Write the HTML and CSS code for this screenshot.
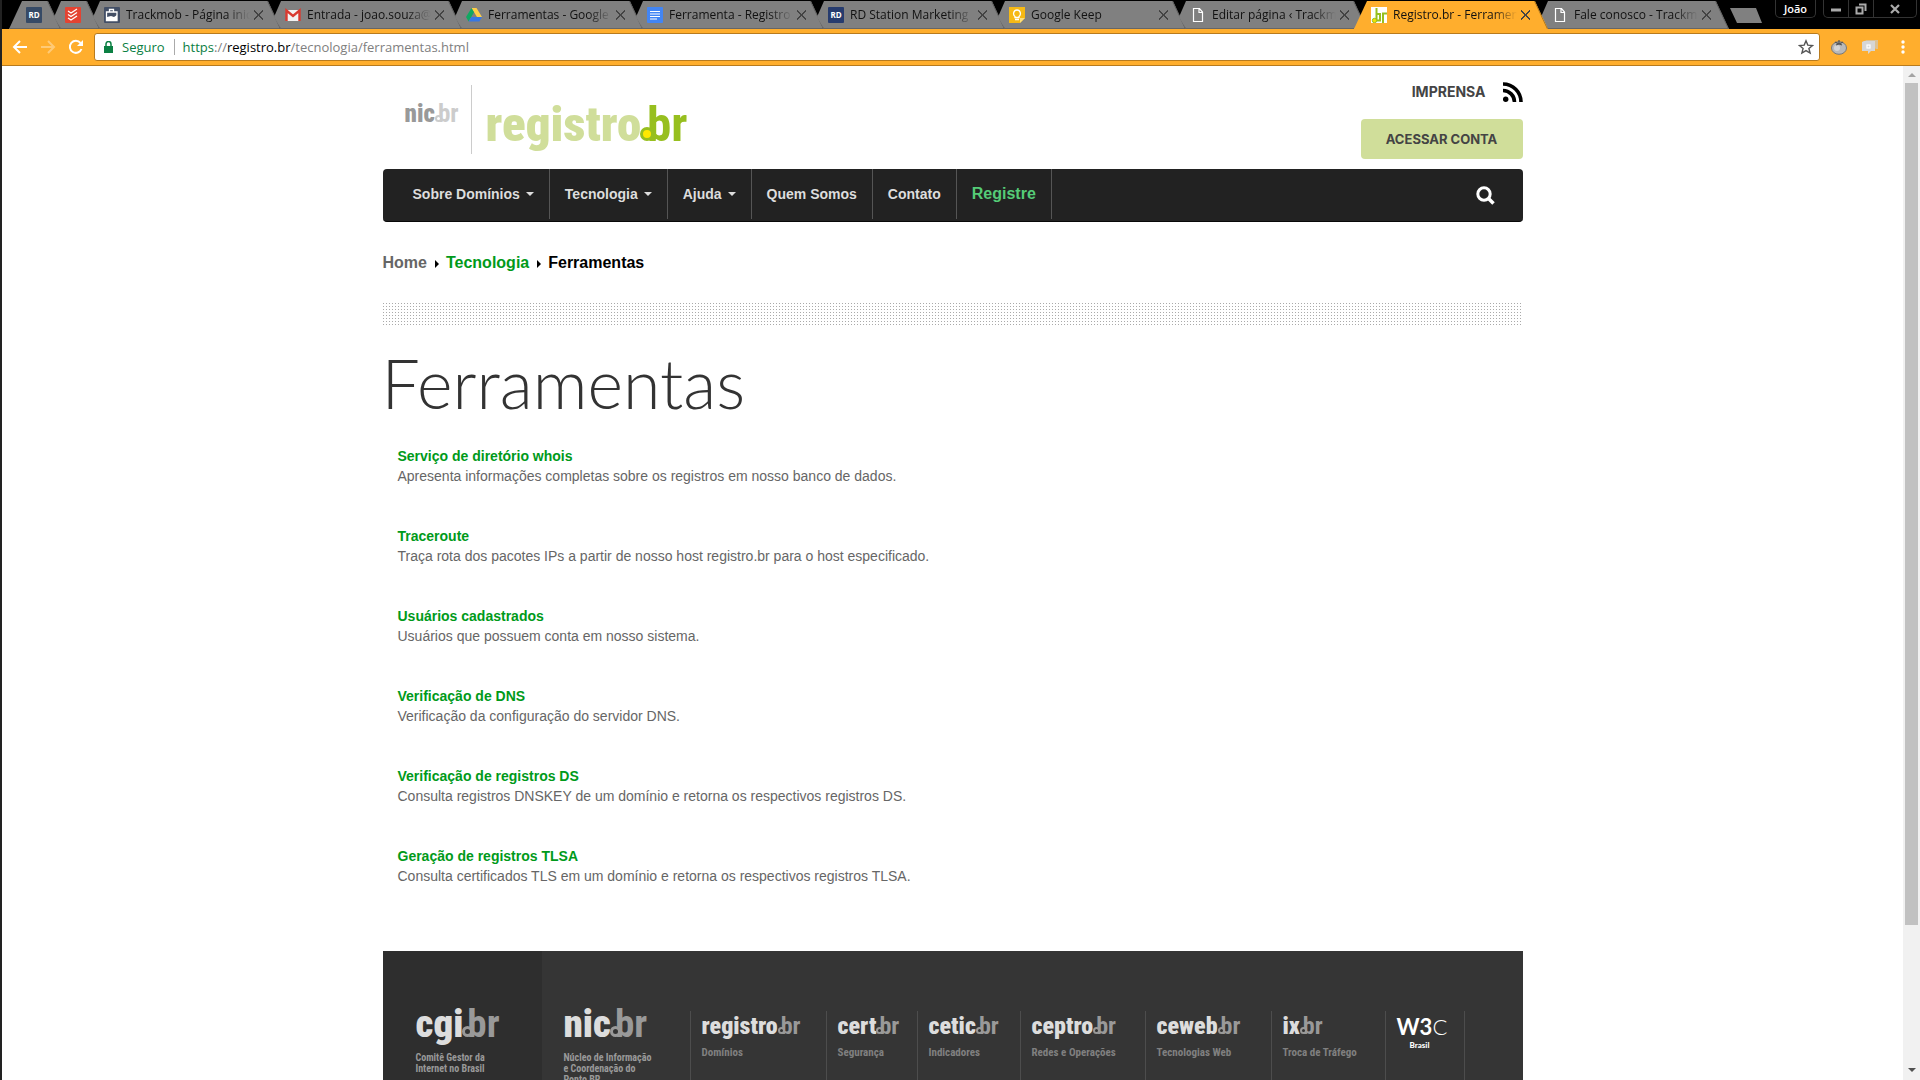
FILE: index.html
```html
<!DOCTYPE html>
<html lang="pt-BR">
<head>
<meta charset="utf-8">
<title>Registro.br - Ferramentas</title>
<link rel="stylesheet" href="styles.css">
</head>
<body>
<div class="window">
  <header class="tabstrip">
    <div class="tabs">
      <div class="tab pinned"><span class="fav rd">RD</span></div>
      <div class="tab pinned"><svg class="fav" viewBox="0 0 16 16"><rect width="16" height="16" rx="1" fill="#e44332"/><path d="M2 4l3 2 6-4M2 7.500l3 2 6-4M2 11l3 2 6-4" transform="translate(1 0)" fill="none" stroke="#fff" stroke-width="1.300"/></svg></div>
      <div class="tab"><svg class="fav" viewBox="0 0 16 16"><rect width="16" height="16" rx="1" fill="#434f66"/><path d="M5.500 5V2.500h4V5M2.500 5h10.500v8.500H2.500z" fill="none" stroke="#fff" stroke-width="1.300"/><path d="M3 10l4-1 3 1 3-2v5.500H3z" fill="#fff"/></svg><span class="label">Trackmob - Página inic</span><button class="close" aria-label="Fechar"></button></div>
      <div class="tab"><svg class="fav" viewBox="0 0 16 16"><path d="M1 3h14v11H1z" fill="#f2f2f2"/><path d="M1.500 14V3.500L8 9l6.500-5.500V14" fill="none" stroke="#d93a30" stroke-width="2.400"/></svg><span class="label">Entrada - joao.souza@</span><button class="close" aria-label="Fechar"></button></div>
      <div class="tab"><svg class="fav" viewBox="0 0 16 16"><path d="M5.500 1h5L16 10h-5z" fill="#ffcf48"/><path d="M5.500 1L0 10l2.600 4.500L8 5.300z" fill="#11a861"/><path d="M5.300 10H16l-2.600 4.500H2.600z" fill="#3777e3"/></svg><span class="label">Ferramentas - Google</span><button class="close" aria-label="Fechar"></button></div>
      <div class="tab"><svg class="fav" viewBox="0 0 16 16"><rect width="16" height="16" rx="1" fill="#4285f4"/><path d="M3 4.500h10M3 7h10M3 9.500h10M3 12h7" stroke="#fff" stroke-width="1.200"/></svg><span class="label">Ferramenta - Registro</span><button class="close" aria-label="Fechar"></button></div>
      <div class="tab"><span class="fav rd navy">RD</span><span class="label">RD Station Marketing</span><button class="close" aria-label="Fechar"></button></div>
      <div class="tab"><svg class="fav" viewBox="0 0 16 16"><path d="M0 0h16v11l-5 5H0z" fill="#f6b915"/><path d="M11 16v-5h5z" fill="#ffe07a"/><path d="M6 9.500C3.500 7.500 4.500 3 8 3s4.500 4.500 2 6.500v1H6zM6 12.500h4" fill="none" stroke="#fff" stroke-width="1.300"/></svg><span class="label">Google Keep</span><button class="close" aria-label="Fechar"></button></div>
      <div class="tab"><svg class="fav" viewBox="0 0 16 16"><path d="M3.500 1.500h6l3 3.500v9.500h-9zM9 1.500V5.500h3.500" fill="none" stroke="#fff" stroke-width="1.200"/></svg><span class="label">Editar página ‹ Trackm</span><button class="close" aria-label="Fechar"></button></div>
      <div class="tab active"><svg class="fav" viewBox="0 0 16 16"><path d="M0 0h16v16H0z" fill="#fff"/><path d="M5.500 1v12.500H9V7H5.500M12 16V6.500h4" fill="none" stroke="#97bf1f" stroke-width="2"/><circle cx="3.500" cy="13.500" r="2.200" fill="#f4e300" stroke="#97bf1f"/></svg><span class="label">Registro.br - Ferramen</span><button class="close" aria-label="Fechar"></button></div>
      <div class="tab"><svg class="fav" viewBox="0 0 16 16"><path d="M3.500 1.500h6l3 3.500v9.500h-9zM9 1.500V5.500h3.500" fill="none" stroke="#fff" stroke-width="1.200"/></svg><span class="label">Fale conosco - Trackm</span><button class="close" aria-label="Fechar"></button></div>
      <button class="newtab" aria-label="Nova guia"></button>
    </div>
    <button class="profile">João</button>
    <div class="controls">
      <button aria-label="Minimizar"><svg viewBox="0 0 12 12"><path d="M1 7h10" stroke="#aaa" stroke-width="3"/></svg></button>
      <button aria-label="Restaurar"><svg viewBox="0 0 12 12"><path d="M1.500 4.500h6v6h-6zM4 1.500h6.500V8" fill="none" stroke="#aaa" stroke-width="2"/></svg></button>
      <button class="wide" aria-label="Fechar janela"><svg viewBox="0 0 12 12"><path d="M2 2l8 8M10 2l-8 8" stroke="#aaa" stroke-width="2.200"/></svg></button>
    </div>
  </header>

  <div class="toolbar">
    <button class="tool" aria-label="Voltar"><svg viewBox="0 0 16 16"><path d="M15 8H2M8 2L2 8l6 6" fill="none" stroke="#fff" stroke-width="2"/></svg></button>
    <button class="tool dim" aria-label="Avançar"><svg viewBox="0 0 16 16"><path d="M1 8h13M8 2l6 6-6 6" fill="none" stroke="#fff" stroke-width="2"/></svg></button>
    <button class="tool" aria-label="Recarregar"><svg viewBox="0 0 16 16"><path d="M13.500 10A6 6 0 1 1 12.500 4" fill="none" stroke="#fff" stroke-width="2"/><path d="M15 1v6H9z" fill="#fff"/></svg></button>
    <div class="omnibox">
      <svg class="lock" viewBox="0 0 9 12"><path d="M0 5h9v7H0z" fill="#0b8043"/><path d="M2 5V3a2.500 2.500 0 0 1 5 0v2" fill="none" stroke="#0b8043" stroke-width="1.500"/></svg>
      <span class="secure">Seguro</span>
      <span class="url"><span class="scheme">https</span>://<span class="host">registro.br</span>/tecnologia/ferramentas.html</span>
      <button class="star" aria-label="Favoritar"><svg viewBox="0 0 16 16"><path d="M8 1.800l1.800 4.300 4.700.4-3.600 3 1.200 4.600L8 11.600l-4.100 2.500 1.200-4.600-3.600-3 4.700-.4z" fill="none" stroke="#555" stroke-width="1.400"/></svg></button>
    </div>
    <button class="ext" aria-label="Tomato"><svg viewBox="0 0 16 16"><ellipse cx="8" cy="9" rx="7.500" ry="6.300" fill="#b9b9b9" stroke="#777"/><ellipse cx="6" cy="9" rx="3" ry="3" fill="#d5d5d5"/><path d="M8 1v4M4 3l4 2 4-2M5 6l3-1 3 1" fill="none" stroke="#555" stroke-width="1.200"/></svg></button>
    <button class="ext" aria-label="Chat"><svg viewBox="0 0 16 16"><path d="M3 1h13v9h-2z" fill="#dcc193"/><path d="M0 3l2-1h11v10h-4l-3 3v-3H0z" fill="#d6d6d6"/><rect x="5" y="6" width="3" height="3" fill="none" stroke="#fff" stroke-width="1.200"/></svg></button>
    <button class="menu" aria-label="Menu"><svg viewBox="0 0 4 14"><circle cx="2" cy="2" r="1.700" fill="#fff"/><circle cx="2" cy="7" r="1.700" fill="#fff"/><circle cx="2" cy="12" r="1.700" fill="#fff"/></svg></button>
  </div>

  <div class="viewport">
    <div class="page">
      <div class="container">
        <header class="masthead">
          <a class="brand small" href="#"><b>nic</b><i class="dot"></i><span>br</span></a>
          <a class="brand main" href="#"><b>registro</b><i class="dot"></i><span>br</span></a>
          <div class="account">
            <div class="press"><a href="#">IMPRENSA</a><svg viewBox="0 0 20 20"><circle cx="2.700" cy="17.300" r="2.700"/><path d="M0 8.500A11.500 11.500 0 0 1 11.500 20M0 2a18 18 0 0 1 18 18" fill="none" stroke="#000" stroke-width="3.600"/></svg></div>
            <button class="login">ACESSAR CONTA</button>
          </div>
        </header>
        <nav class="navbar">
          <a class="drop" href="#">Sobre Domínios</a>
          <a class="drop" href="#">Tecnologia</a>
          <a class="drop" href="#">Ajuda</a>
          <a href="#">Quem Somos</a>
          <a href="#">Contato</a>
          <a class="cta" href="#">Registre</a>
          <button class="search" aria-label="Buscar"><svg viewBox="0 0 19 19"><circle cx="8" cy="8" r="6.200" fill="none" stroke="#fff" stroke-width="3"/><path d="M12 12l5.500 5.500" stroke="#fff" stroke-width="3.500"/></svg></button>
        </nav>
        <div class="crumbs"><a class="home" href="#">Home</a><i class="arrow"></i><a href="#">Tecnologia</a><i class="arrow"></i><span>Ferramentas</span></div>
        <div class="dots"></div>
        <h1>Ferramentas</h1>
        <dl class="tools">
          <dt><a href="#">Serviço de diretório whois</a></dt><dd>Apresenta informações completas sobre os registros em nosso banco de dados.</dd>
          <dt><a href="#">Traceroute</a></dt><dd>Traça rota dos pacotes IPs a partir de nosso host registro.br para o host especificado.</dd>
          <dt><a href="#">Usuários cadastrados</a></dt><dd>Usuários que possuem conta em nosso sistema.</dd>
          <dt><a href="#">Verificação de DNS</a></dt><dd>Verificação da configuração do servidor DNS.</dd>
          <dt><a href="#">Verificação de registros DS</a></dt><dd>Consulta registros DNSKEY de um domínio e retorna os respectivos registros DS.</dd>
          <dt><a href="#">Geração de registros TLSA</a></dt><dd>Consulta certificados TLS em um domínio e retorna os respectivos registros TLSA.</dd>
        </dl>
        <footer class="footer">
          <div class="org cgi"><a class="brand" href="#"><b>cgi</b><i class="dot"></i><span>br</span></a><p>Comitê Gestor da<br>Internet no Brasil</p></div>
          <div class="org nic"><a class="brand" href="#"><b>nic</b><i class="dot"></i><span>br</span></a><p>Núcleo de Informação<br>e Coordenação do<br>Ponto BR</p></div>
          <div class="unit w136"><a class="brand" href="#"><b>registro</b><i class="dot"></i><span>br</span></a><p>Domínios</p></div>
          <div class="unit w91"><a class="brand" href="#"><b>cert</b><i class="dot"></i><span>br</span></a><p>Segurança</p></div>
          <div class="unit w103"><a class="brand" href="#"><b>cetic</b><i class="dot"></i><span>br</span></a><p>Indicadores</p></div>
          <div class="unit w125"><a class="brand" href="#"><b>ceptro</b><i class="dot"></i><span>br</span></a><p>Redes e Operações</p></div>
          <div class="unit w126"><a class="brand" href="#"><b>ceweb</b><i class="dot"></i><span>br</span></a><p>Tecnologias Web</p></div>
          <div class="unit w114"><a class="brand" href="#"><b>ix</b><i class="dot"></i><span>br</span></a><p>Troca de Tráfego</p></div>
          <div class="unit w3c"><a href="#"><b>W3</b><span>C</span></a><p>Brasil</p></div>
        </footer>
      </div>
    </div>
    <div class="scrollbar"><i class="up"></i><i class="thumb"></i><i class="down"></i></div>
  </div>
</div>
</body>
</html>
```
FILE: styles.css
```css
* { box-sizing: border-box; }
body { margin: 0; font-family: "Liberation Sans", Arial, sans-serif; font-size: 14px; line-height: 20px; color: #666; background: #fff; }
button { border: 0; padding: 0; background: none; font: inherit; color: inherit; }
a { color: inherit; text-decoration: none; }
svg { display: block; flex: none; }
p { margin: 0; }

.window { display: flex; flex-direction: column; height: 100vh; border-left: 2px solid #222; overflow: hidden; }

/* Tab strip */
.tabstrip { display: flex; flex: none; align-items: flex-start; height: 29px; background: #000; font-family: "Open Sans", "Noto Sans", sans-serif; font-size: 12px; color: #111; }
.tabs { display: flex; flex: 1; min-width: 0; padding: 1px 0 0 7px; }
.tab { position: relative; display: flex; flex: 0 1 194px; align-items: center; min-width: 0; height: 28px; margin-right: -13px; padding: 0 17px; background: #808080; border-bottom: 1px solid #666; clip-path: polygon(13px 0, calc(100% - 13px) 0, 100% 100%, 13px 100%, 6px 16px); }
.tab:first-child { clip-path: polygon(13px 0, calc(100% - 13px) 0, 100% 100%, 0 100%); }
.tab.pinned { flex: none; width: 52px; }
.tab.active { z-index: 1; background: #ffae2d; border-color: #ffae2d; clip-path: polygon(13px 0, calc(100% - 13px) 0, 100% 100%, 0 100%); }
.tab::after { content: ""; position: absolute; top: 0; right: 0; width: 15px; height: 28px; background: #5c5c5c; clip-path: polygon(1px 0, 2px 0, 100% 100%, 14px 100%); }
.tab.active::after { background: #a9741f; }
.fav { flex: none; width: 16px; height: 16px; }
.rd { background: #364a66; border-radius: 1px; color: #fff; font-size: 8px; font-weight: 700; line-height: 16px; text-align: center; }
.rd.navy { background: #263b6e; }
.label { flex: 1; min-width: 0; margin: 0 4px 0 6px; overflow: hidden; white-space: nowrap; -webkit-mask-image: linear-gradient(to left, transparent, #000 24px); mask-image: linear-gradient(to left, transparent, #000 24px); }
.close { position: relative; flex: none; width: 9px; height: 10px; margin-right: 1px; background: linear-gradient(45deg, transparent 43%, #444 43%, #444 57%, transparent 57%), linear-gradient(-45deg, transparent 43%, #444 43%, #444 57%, transparent 57%); }
.newtab { width: 32px; height: 15px; margin: 7px 0 0 14px; background: #808080; clip-path: polygon(0 0, 26px 0, 100% 100%, 7px 100%); }
.profile { width: 41px; height: 18px; margin-right: 7px; border: 1px solid #333; border-top: 0; border-radius: 0 0 5px 5px; color: #fff; font-size: 11px; font-weight: 600; line-height: 16px; }
.controls { display: flex; height: 18px; margin-right: 3px; border: 1px solid #333; border-top: 0; border-radius: 0 0 5px 5px; }
.controls button { display: flex; justify-content: center; align-items: center; width: 25px; border-right: 1px solid #333; }
.controls .wide { width: 42px; border: 0; }
.controls svg { width: 12px; height: 12px; }

/* Address bar */
.toolbar { display: flex; flex: none; align-items: center; height: 37px; padding: 0 15px 0 10px; background: #ffae2d; border-bottom: 1px solid #b87b1e; font-family: "Open Sans", "Noto Sans", sans-serif; }
.tool { margin-right: 12px; }
.tool + .tool + .tool { margin-right: 10px; }
.tool svg, .ext svg, .star svg { width: 16px; height: 16px; }
.dim { opacity: .35; }
.omnibox { display: flex; flex: 1; align-items: center; height: 28px; padding: 0 5px 0 9px; background: #fff; border: 1px solid #b87b1e; border-radius: 3px; font-size: 13px; color: #808080; }
.lock { width: 9px; height: 12px; margin-right: 9px; }
.secure { padding-right: 9px; border-right: 1px solid #aaa; color: #0b8043; line-height: 16px; }
.url { flex: 1; margin-left: 8px; }
.scheme { color: #0b8043; }
.host { color: #000; }
.ext { margin-left: 11px; }
.ext + .ext { margin-left: 15px; }
.menu { margin-left: 23px; }
.menu svg { width: 4px; height: 14px; }

/* Viewport */
.viewport { display: flex; flex: 1; min-height: 0; }
.page { flex: 1; min-width: 0; overflow: hidden; }
.container { max-width: 1140px; margin: 0 auto; }
.scrollbar { display: flex; flex: none; flex-direction: column; align-items: center; width: 17px; background: #f1f1f1; }
.scrollbar .thumb { width: 13px; flex: 0 0 83%; background: #c1c1c1; }
.up, .down { border: 4px solid transparent; }
.up { margin: 3px 0 6px; border-bottom-color: #a3a3a3; }
.down { margin: auto 0 4px; border-top-color: #505050; }

/* Brand wordmarks: the ring lies over the stem of the b */
.brand { display: flex; align-items: baseline; font-family: "Liberation Sans Narrow", "Roboto Condensed", "Open Sans Condensed", "Liberation Sans", sans-serif; font-weight: 700; }
.dot { position: relative; flex: none; width: 11px; height: 11px; margin: 0 -6px 0 -1px; border: 3px solid #999; border-radius: 50%; background: #333; }
.masthead { display: flex; height: 103px; padding: 19px 0 0 22px; }
.brand.small { height: 69px; padding-right: 12px; border-right: 1px solid #ccc; font-size: 25px; line-height: 58px; color: #999; }
.brand.small span { color: #ccc; }
.brand.small .dot { width: 7px; height: 7px; margin: 0 -4px 0 0; border: 2px solid #ccc; background: #fff; }
.brand.main { margin-left: 14px; font-size: 49px; line-height: 80px; color: #d0de9a; }
.brand.main span { color: #97bf1f; }
.brand.main .dot { width: 14px; height: 14px; margin: 0 -7px 0 -1px; border-color: #97bf1f; background: #ffe800; }
.account { display: flex; flex-direction: column; align-items: flex-end; margin: -3px 0 0 auto; font-family: Inter, sans-serif; font-weight: 700; font-size: 13px; color: #444; }
.press { display: flex; align-items: center; gap: 17px; height: 20px; font-size: 14px; }
.press svg { width: 20px; height: 20px; }
.login { width: 162px; height: 40px; margin-top: 17px; border-radius: 4px; background: #d0de9a; }

.navbar { display: flex; height: 53px; padding-left: 15px; border-radius: 4px; background: #222; border-bottom: 1px solid #080808; color: #ddd; font-weight: 700; }
.navbar a { display: flex; align-items: center; height: 50px; padding: 0 15px; border-right: 1px solid #555; }
.drop::after { content: ""; margin-left: 6px; border: 4px solid transparent; border-top-color: #ddd; border-bottom: 0; }
.navbar .cta { color: #5c7; font-size: 16px; }
.search { margin: 0 28px 0 auto; }
.search svg { width: 19px; height: 19px; }

.crumbs { display: flex; align-items: center; height: 20px; margin-top: 31px; font-size: 16px; font-weight: 700; color: #000; }
.crumbs a { color: #009a1a; }
.crumbs .home { color: #666; }
.arrow { margin: 2px 7px 0 8px; border: 4px solid transparent; border-left-color: #000; border-right: 0; }
.dots { height: 24px; margin-top: 30px; background-image: conic-gradient(from 90deg at 2px 2px, #aaa 25%, transparent 0); background-position: -2px -2px; background-size: 3px 3px; }
h1 { margin: 16px 0 23px -1px; font-family: Lato, sans-serif; font-weight: 300; font-size: 68px; line-height: 80px; color: #333; }
.tools { margin: 0 0 65px 15px; }
.tools dt { font-weight: 700; color: #009a1a; }
.tools dd { margin: 0 0 40px; }

/* Footer */
.footer { display: flex; align-items: stretch; min-height: 220px; background: #353535; color: #999; }
.footer .brand { color: #ddd; }
.footer .brand span { color: #999; }
.footer p { font-family: "Liberation Sans Narrow", "Roboto Condensed", "Liberation Sans", sans-serif; font-weight: 700; font-size: 10px; line-height: 11px; white-space: nowrap; }
.org { padding-top: 44px; }
.org .brand { height: 57px; font-size: 39px; line-height: 58px; }
.cgi { width: 159px; padding-left: 33px; background: #2e2e2e; }
.nic { width: 148px; padding-left: 22px; }
.unit { margin-top: 60px; padding-left: 11px; border-left: 1px solid #4d4d4d; }
.unit .brand { height: 36px; font-size: 24px; line-height: 30px; }
.unit .dot { width: 7px; height: 7px; margin: 0 -4px 0 0; border-width: 2px; }
.footer .unit p { color: #808080; font-size: 11px; line-height: 12px; }
.w136 { width: 136px; }
.w91 { width: 91px; }
.w103 { width: 103px; }
.w125 { width: 125px; }
.w126 { width: 126px; }
.w114 { width: 114px; }
.w3c { width: 80px; border-right: 1px solid #4d4d4d; }
.w3c a { display: block; height: 28px; font-family: Lato, sans-serif; font-size: 22px; line-height: 32px; color: #fff; }
.w3c a b { font-weight: 700; }
.w3c a span { font-weight: 300; }
.footer .w3c p { padding-left: 13px; font-family: Lato, sans-serif; font-size: 8px; font-weight: 900; color: #fff; }
```
